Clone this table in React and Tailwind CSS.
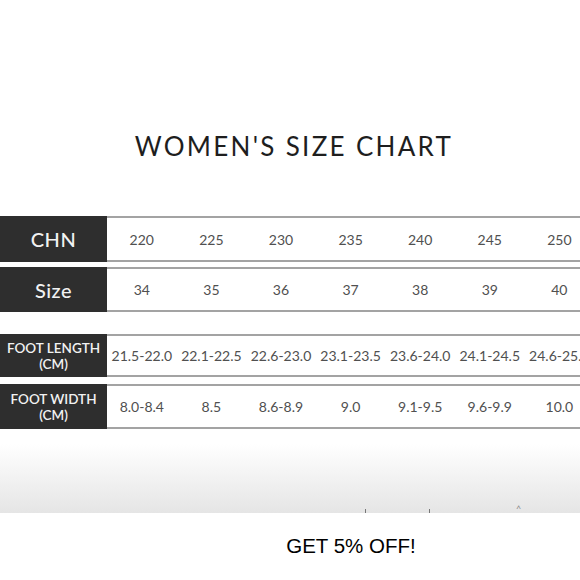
import React from 'react';

const rows = [
  { label: 'CHN', big: true, h: 'h-[46px]', vals: ['220', '225', '230', '235', '240', '245', '250'] },
  { label: 'Size', big: true, h: 'h-[45px]', mt: 'mt-[5px]', vals: ['34', '35', '36', '37', '38', '39', '40'] },
  {
    label: 'FOOT LENGTH',
    h: 'h-[43px]',
    mt: 'mt-[22px]',
    vals: ['21.5-22.0', '22.1-22.5', '22.6-23.0', '23.1-23.5', '23.6-24.0', '24.1-24.5', '24.6-25.0'],
  },
  { label: 'FOOT WIDTH', h: 'h-[45px]', mt: 'mt-[7px]', vals: ['8.0-8.4', '8.5', '8.6-8.9', '9.0', '9.1-9.5', '9.6-9.9', '10.0'] },
];

function Row({ label, big, h, mt = '', vals }) {
  return (
    <div className={`flex ${h} ${mt}`}>
      <div className="w-[107px] shrink-0 bg-[#2e2e2e] text-[#f2f2f2] flex flex-col items-center justify-center">
        {big ? (
          <span className="text-[20px] leading-none font-medium tracking-[0.5px]">{label}</span>
        ) : (
          <>
            <span className="text-[13.5px] leading-[16px] font-semibold">{label}</span>
            <span className="text-[13.5px] leading-[16px] font-semibold">(CM)</span>
          </>
        )}
      </div>
      <div className="flex-1 flex border-y-2 border-[#a3a3a3] overflow-hidden">
        {vals.map((v) => (
          <div key={v} className="w-[69.6px] shrink-0 flex items-center justify-center text-[14px] text-[#505050] whitespace-nowrap">
            {v}
          </div>
        ))}
      </div>
    </div>
  );
}

export default function App() {
  return (
    <div className="w-[580px] h-[580px] overflow-hidden bg-white flex flex-col" style={{ fontFamily: 'Lato, "Open Sans", sans-serif' }}>
      <h1 className="mt-[130px] h-[32px] leading-[32px] text-center text-[26px] font-normal text-[#1e1e1e] tracking-[2.3px] pl-[8px]">
        WOMEN'S SIZE CHART
      </h1>
      <div className="mt-[54px]">
        {rows.map((r) => (
          <Row key={r.label} {...r} />
        ))}
      </div>
      <div className="h-[84px] shrink-0 bg-gradient-to-b from-white from-[18%] to-[#e5e5e5] flex items-end">
        <div className="flex items-end h-[4px] w-full">
          <span className="ml-[365px] w-px h-[4px] bg-[#777]" />
          <span className="ml-[63px] w-px h-[4px] bg-[#777]" />
          <span className="ml-[86px] text-[9px] leading-none text-[#888]">^</span>
        </div>
      </div>
      <div className="flex-1 flex items-center justify-center pb-[1px]">
        <span className="ml-[122px] text-[20.5px] text-black" style={{ fontFamily: '"Liberation Sans", Arial, sans-serif' }}>
          GET 5% OFF!
        </span>
      </div>
    </div>
  );
}
